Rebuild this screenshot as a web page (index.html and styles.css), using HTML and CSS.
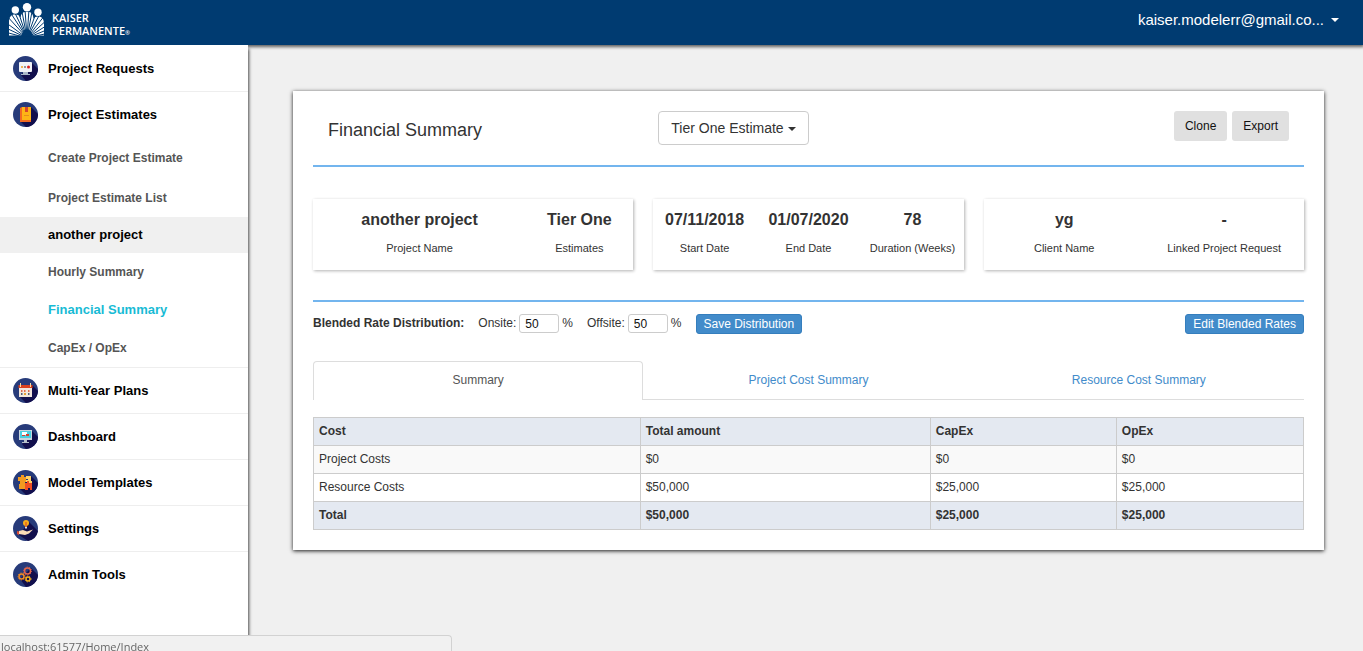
FILE: index.html
```
<!DOCTYPE html>
<html lang="en">
<head>
<meta charset="utf-8">
<title>Financial Summary</title>
<link rel="stylesheet" href="styles.css">
</head>
<body>
<header class="topbar">
  <a class="brand" href="#">
    <svg class="brand-mark" width="36" height="34" viewBox="0 0 36 34" fill="#fff" aria-hidden="true">
      <path d="M0 32.500V19c0-5 2-7.500 6-7.500 3 0 4.500 1 5.500 3C12 11 13.500 9 16.500 9h3c3 0 4.500 2 5 6.500 1-1.200 2.500-2 4.500-2 4 0 6 2.500 6 8v11z"/>
      <path fill="none" stroke="#003b71" d="M18 35L-4 29M18 35L-4 24.500M18 35L-4 19M18 35L-3 12M18 35L1 9M18 35L5 8M18 35L9 8M18 35L12.500 6M18 35L16 6M18 35L20 6M18 35L23.500 6M18 35L27 10M18 35L31.500 10M18 35L36 12M18 35L40 15M18 35L40 21M18 35L40 26M18 35L40 30"/>
      <path fill="#003b71" d="M12.500 33.500a5.500 7 0 0 1 11 0z"/>
      <circle cx="18" cy="4.300" r="4.200"/><circle cx="6.300" cy="7" r="3.700"/><circle cx="29" cy="9.300" r="3.700"/>
    </svg>
    <span class="brand-name">KAISER<br>PERMANENTE<small>®</small></span>
  </a>
  <button class="account" type="button">kaiser.modelerr@gmail.co... <i class="caret"></i></button>
</header>
<div class="layout">
  <nav class="sidebar">
    <div class="group"><a class="item" href="#">
      <svg class="icon" viewBox="0 0 25 25"><use href="#disc"/><path fill="#120f4d" d="M19 7l6 6a12.500 12.500 0 0 1-12 12l-5-6z"/><rect x="6" y="6" width="13" height="10" rx="1" fill="#f1f3f7"/><path fill="#aab8c8" d="M10 16h5v2h2v1H8v-1h2z"/><circle cx="9" cy="11" r="1" fill="#f0a020"/><circle cx="12" cy="11" r="1" fill="#777"/><circle cx="15.500" cy="11" r="1.500" fill="#dc2020"/></svg>
      Project Requests</a></div>
    <div class="group">
      <a class="item" href="#">
        <svg class="icon" viewBox="0 0 25 25"><use href="#disc"/><path fill="#120f4d" d="M18 5l7 7a12.500 12.500 0 0 1-12 13l-6-6z"/><path fill="#f26a21" d="M7 6l2-1v13h9v2H7z"/><path fill="#fdb515" d="M9 5h9v13H9z"/><path fill="#d8452c" d="M12 5h3v5h-3z"/><path fill="#e88a1c" d="M11 13h5v1h-5z"/></svg>
        Project Estimates</a>
      <a class="sub sub-tall" href="#">Create Project Estimate</a>
      <a class="sub sub-tall" href="#">Project Estimate List</a>
      <a class="sub sub-project" href="#">another project</a>
      <a class="sub" href="#">Hourly Summary</a>
      <a class="sub sub-active" href="#">Financial Summary</a>
      <a class="sub" href="#">CapEx / OpEx</a>
    </div>
    <div class="group"><a class="item" href="#">
      <svg class="icon" viewBox="0 0 25 25"><use href="#disc"/><path fill="#120f4d" d="M19 7l6 6a12.500 12.500 0 0 1-12 12l-6-6z"/><path fill="#f2e6dc" d="M6 7h13v12H6z"/><path fill="#d9421f" d="M5.500 7h14v3h-14z"/><path fill="#f7d9a0" d="M7 5h1v4H7zM17 5h1v4h-1z"/><path fill="#e06b50" d="M8 12h1.500v2H8zM11 12h1.500v2H11zM15 12h1.500v2H15z"/><path fill="#555b73" d="M8 15h1.500v2H8zM15 15h1.500v2H15z"/><path fill="#e3a036" d="M11 15h2v2h-2z"/></svg>
      Multi-Year Plans</a></div>
    <div class="group"><a class="item" href="#">
      <svg class="icon" viewBox="0 0 25 25"><use href="#disc"/><path fill="#120f4d" d="M19 7l6 6a12.500 12.500 0 0 1-12 12l-4-5z"/><path fill="#c9d6de" d="M6 6h13v10H6z"/><path fill="#4cd0e0" d="M7 7h11v7H7z"/><path fill="#fff" d="M9 8h5v3H9z"/><path fill="#d8402e" d="M9 11h3v1H9zM13 10h3v2h-3z"/><path fill="#b5bfca" d="M11 16h3v2h2v1H9v-1h2z"/></svg>
      Dashboard</a></div>
    <div class="group"><a class="item" href="#">
      <svg class="icon" viewBox="0 0 25 25"><use href="#disc"/><path fill="#120f4d" d="M18 6l7 7a12.500 12.500 0 0 1-12 12l-6-6z"/><path fill="#f29a20" d="M5 7h3V5h3v2h2v5h-1v2h1v5H6v-5h1v-3H5z"/><path fill="#ffd166" d="M13 6h5v5h1v2h-4v-1h-2v-2h2V9h-2z"/><path fill="#f04e23" d="M12 13h2v-2h2v2h3v7h-2v-2h-2v2h-3z"/></svg>
      Model Templates</a></div>
    <div class="group"><a class="item" href="#">
      <svg class="icon" viewBox="0 0 25 25"><use href="#disc"/><path fill="#120f4d" d="M16 6l9 9a12.500 12.500 0 0 1-10 10l-9-6z"/><circle cx="13" cy="7" r="3" fill="#f8ae1a"/><path fill="#e87722" d="M12 6h2v5h-2z"/><path fill="#d8dce5" d="M12 11h2v1.500h-2z"/><path fill="#fbdcb8" d="M6 15l4-1 4 1.500 6-2-4 4-4 1.500-6-1z"/><path fill="#dd4b33" d="M4 15l2 .5v3.500l-2-1z"/></svg>
      Settings</a></div>
    <div class="group group-last"><a class="item" href="#">
      <svg class="icon" viewBox="0 0 25 25"><use href="#disc"/><path fill="#120f4d" d="M18 6l7 7a12.500 12.500 0 0 1-12 12l-6-8z"/><g fill="none" stroke-width="1.500"><circle cx="14.500" cy="9" r="3" stroke="#e2654a"/><circle cx="8.500" cy="14.500" r="2.500" stroke="#f08a24"/><circle cx="15" cy="17" r="2" stroke="#f6b21b"/></g><g fill="none" stroke-dasharray="1 1.500"><circle cx="14.500" cy="9" r="4" stroke="#e2654a"/><circle cx="8.500" cy="14.500" r="3.500" stroke="#f08a24"/><circle cx="15" cy="17" r="3" stroke="#f6b21b"/></g></svg>
      Admin Tools</a></div>
    <svg class="defs" aria-hidden="true"><defs><circle id="disc" cx="12.500" cy="12.500" r="12.500" fill="#273b7a"/></defs></svg>
  </nav>
  <main class="main">
    <section class="card">
      <div class="card-head">
        <h1>Financial Summary</h1>
        <div><button class="tier" type="button">Tier One Estimate <i class="caret"></i></button></div>
        <div class="actions"><button type="button">Clone</button><button type="button">Export</button></div>
      </div>
      <div class="stats">
        <dl class="stat-box stat-box-name">
          <div><dt>Project Name</dt><dd>another project</dd></div>
          <div><dt>Estimates</dt><dd>Tier One</dd></div>
        </dl>
        <dl class="stat-box stat-box-dates">
          <div><dt>Start Date</dt><dd>07/11/2018</dd></div>
          <div><dt>End Date</dt><dd>01/07/2020</dd></div>
          <div><dt>Duration (Weeks)</dt><dd>78</dd></div>
        </dl>
        <dl class="stat-box">
          <div><dt>Client Name</dt><dd>yg</dd></div>
          <div><dt>Linked Project Request</dt><dd>-</dd></div>
        </dl>
      </div>
      <form class="rates">
        <strong>Blended Rate Distribution:</strong>
        <div class="rate"><label for="onsite">Onsite:</label><input id="onsite" type="text" value="50"><span>%</span></div>
        <div class="rate"><label for="offsite">Offsite:</label><input id="offsite" type="text" value="50"><span>%</span></div>
        <button class="primary" type="button">Save Distribution</button>
        <button class="primary edit" type="button">Edit Blended Rates</button>
      </form>
      <div class="tabs">
        <a class="tab tab-active" href="#">Summary</a>
        <a class="tab" href="#">Project Cost Summary</a>
        <a class="tab" href="#">Resource Cost Summary</a>
      </div>
      <table class="costs">
        <colgroup><col class="col-cost"><col class="col-total"><col class="col-capex"><col></colgroup>
        <thead><tr><th>Cost</th><th>Total amount</th><th>CapEx</th><th>OpEx</th></tr></thead>
        <tbody>
          <tr><td>Project Costs</td><td>$0</td><td>$0</td><td>$0</td></tr>
          <tr><td>Resource Costs</td><td>$50,000</td><td>$25,000</td><td>$25,000</td></tr>
        </tbody>
        <tfoot><tr><th>Total</th><th>$50,000</th><th>$25,000</th><th>$25,000</th></tr></tfoot>
      </table>
    </section>
  </main>
</div>
<div class="status">localhost:61577/Home/Index</div>
</body>
</html>
```
FILE: styles.css
```
* { box-sizing: border-box; }
body {
  margin: 0;
  min-height: 100vh;
  display: flex;
  flex-direction: column;
  background: #f0f0f0;
  color: #333;
  font: 12px/18px "Liberation Sans", Arial, sans-serif;
}
a { color: inherit; text-decoration: none; }
button, input { font: inherit; }
button { cursor: pointer; }

.topbar {
  display: flex;
  justify-content: space-between;
  height: 45px;
  padding: 0 24px 0 9px;
  background: #003b71;
  box-shadow: 0 1px 3px 1px rgba(0, 0, 0, .6);
  color: #fff;
}
.brand { display: flex; gap: 7px; padding-top: 3px; }
.brand-name {
  padding-top: 8px;
  font: 600 11px/13px "Open Sans", sans-serif;
}
.brand-name small { font-size: 6px; line-height: 1; }
.account {
  display: flex;
  align-items: center;
  gap: 7px;
  height: 40px;
  padding: 0;
  border: 0;
  background: none;
  color: #fff;
  font-size: 15px;
}
.caret {
  display: inline-block;
  border: 4px solid transparent;
  border-top-color: currentColor;
  border-bottom: 0;
  vertical-align: middle;
}

.layout { display: flex; flex: 1; }
.sidebar {
  position: relative;
  flex: 0 0 248px;
  padding-top: 1px;
  background: #fff;
  box-shadow: 1px 4px 3px rgba(0, 0, 0, .7);
}
.group { border-bottom: 1px solid #eee; }
.group-last { border-bottom: 0; }
.item {
  display: flex;
  align-items: center;
  gap: 10px;
  height: 45px;
  padding: 0 13px;
  color: #000;
  font-size: 13px;
  font-weight: bold;
}
.icon { width: 25px; height: 25px; }
.defs { display: block; width: 0; height: 0; }
.sub {
  display: flex;
  align-items: center;
  height: 38px;
  padding-left: 48px;
  color: #555;
  font-weight: bold;
}
.sub-tall { height: 40px; padding-top: 2px; }
.sub-project {
  height: 36px;
  background: #f0f0f0;
  color: #000;
  font-size: 13px;
}
.sub-active { color: #18bbd5; font-size: 13px; }

.main { flex: 1; padding: 46px 39px 46px 45px; }
.card {
  padding: 20px;
  background: #fff;
  box-shadow: 0 1px 4px rgba(0, 0, 0, .9);
}
.card-head {
  display: grid;
  grid-template-columns: repeat(3, 1fr);
  height: 56px;
  border-bottom: 2px solid #73b5ee;
}
.card-head > * { padding: 0 15px; }
h1 { margin: 0; font-size: 18px; font-weight: normal; line-height: 38px; }
.tier {
  height: 34px;
  padding: 0 12px;
  border: 1px solid #ccc;
  border-radius: 4px;
  background: #fff;
  color: #333;
  font-size: 14px;
}
.actions { display: flex; justify-content: flex-end; gap: 5px; }
.actions button {
  height: 30px;
  padding: 0 11px;
  border: 0;
  border-radius: 3px;
  background: #e0e0e0;
  color: #111;
}

.stats {
  display: grid;
  grid-template-columns: 320fr 312fr 320fr;
  gap: 20px;
  padding: 32px 0 30px;
  border-bottom: 2px solid #73b5ee;
}
.stat-box {
  display: grid;
  grid-template-columns: 1fr 1fr;
  align-items: center;
  height: 71px;
  margin: 0;
  padding-bottom: 1px;
  box-shadow: 1px 1px 3px rgba(0, 0, 0, .3);
  text-align: center;
}
.stat-box-name { grid-template-columns: 2fr 1fr; }
.stat-box-dates { grid-template-columns: repeat(3, 1fr); }
.stat-box > div {
  display: flex;
  flex-direction: column-reverse;
  gap: 9px;
}
.stat-box dt { font-size: 11px; line-height: 20px; }
.stat-box dd { margin: 0; font-size: 16px; font-weight: bold; line-height: 18px; }

.rates { display: flex; gap: 14px; padding: 12px 0 27px; }
.rate { display: flex; gap: 3px; }
.rate input {
  width: 40px;
  height: 19px;
  padding: 0 5px;
  border: 1px solid #ccc;
  border-radius: 3px;
  color: #111;
}
.primary {
  height: 20px;
  padding: 0 7px;
  border: 1px solid #357ebd;
  border-radius: 3px;
  background: #428bca;
  color: #fff;
}
.edit { margin-left: auto; }

.tabs { display: grid; grid-template-columns: repeat(3, 1fr); }
.tab {
  height: 39px;
  border-bottom: 1px solid #ddd;
  color: #428bca;
  line-height: 38px;
  text-align: center;
}
.tab-active {
  border: 1px solid #ddd;
  border-bottom: 0;
  border-radius: 4px 4px 0 0;
  color: #555;
  line-height: 36px;
}

.costs {
  width: 100%;
  margin-top: 17px;
  border-collapse: collapse;
  table-layout: fixed;
}
.col-cost { width: 33%; }
.col-total { width: 29.3%; }
.col-capex { width: 18.8%; }
.costs th, .costs td {
  height: 28px;
  padding: 0 5px 2px;
  border: 1px solid #ccc;
  text-align: left;
}
.costs th { background: #e4e9f1; }
.costs tbody tr:first-child { background: #f9f9f9; }

.status {
  position: fixed;
  left: 0;
  bottom: 0;
  width: 452px;
  height: 16px;
  padding-left: 1px;
  border: 1px solid #d2d2d2;
  border-width: 1px 1px 0 0;
  border-top-right-radius: 4px;
  background: #f1f1f1;
  color: #666;
  font: 11px/21px "Open Sans", "Noto Sans", sans-serif;
}
```
